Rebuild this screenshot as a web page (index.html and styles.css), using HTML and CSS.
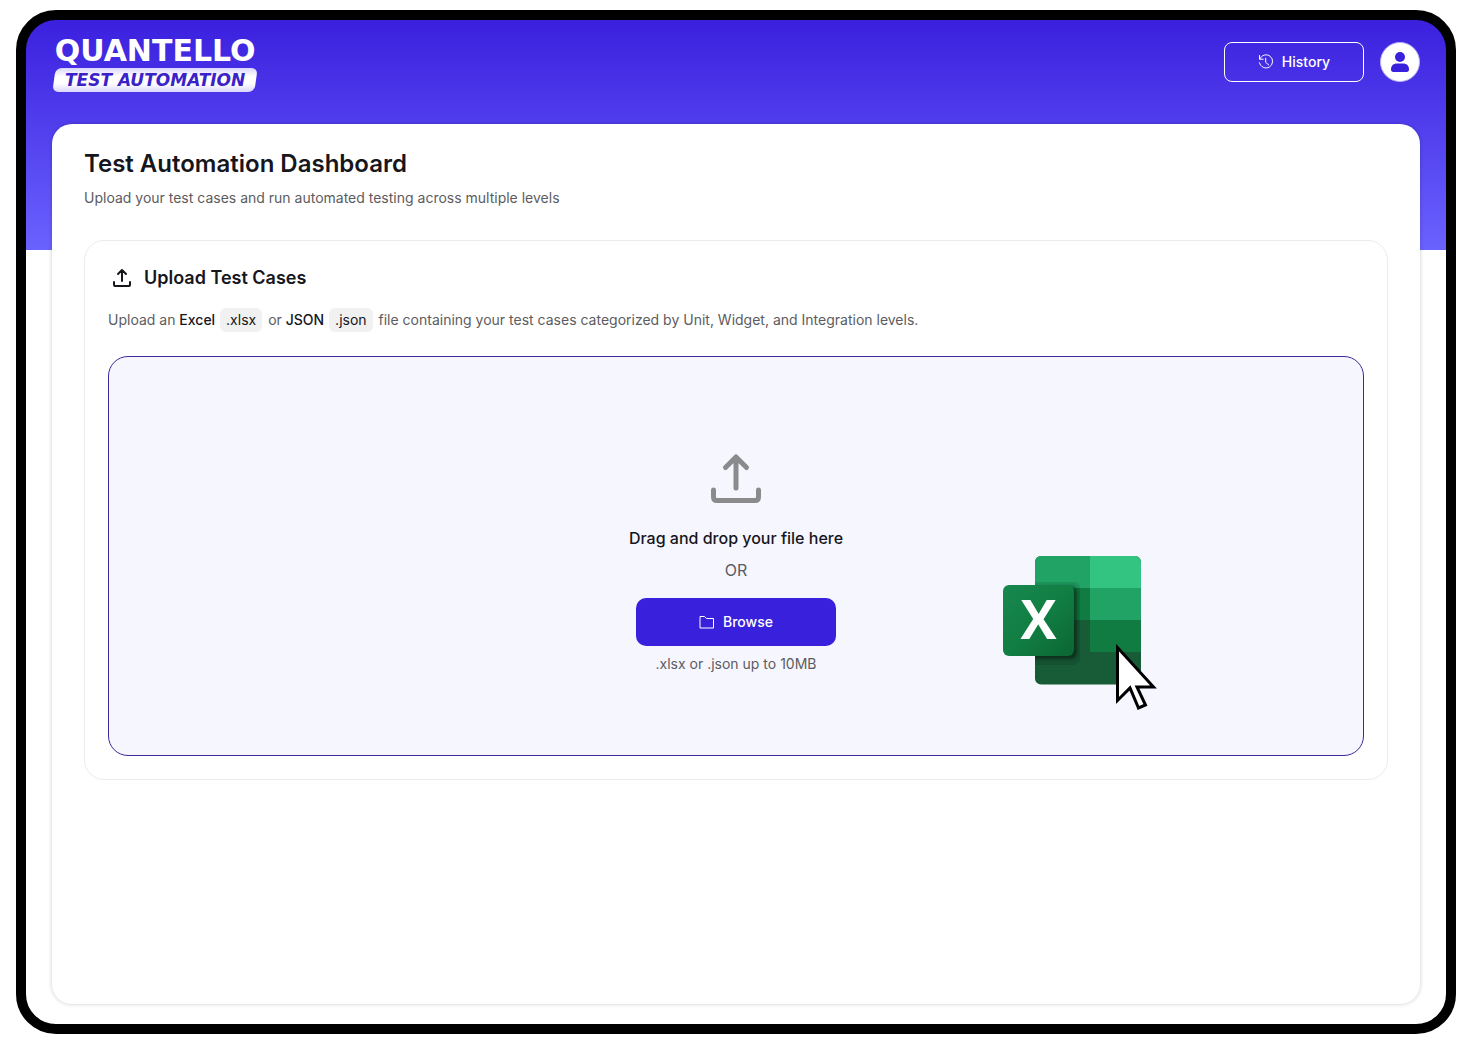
FILE: index.html
```html
<!DOCTYPE html>
<html lang="en">
<head>
    <meta charset="UTF-8">
    <meta name="viewport" content="width=device-width, initial-scale=1.0">
    <title>Test Automation Dashboard</title>
    <link rel="stylesheet" href="styles.css">
</head>
<body>
<div class="app-frame">
    <header class="topbar">
        <a class="logo" href="#">
            <span class="logo-name">QUANTELLO</span>
            <span class="logo-product">TEST AUTOMATION</span>
        </a>
        <div class="topbar-actions">
            <button type="button" class="history-btn">
                <svg width="16" height="16" viewBox="0 0 16 16" fill="none" stroke="currentColor" stroke-linecap="round" stroke-linejoin="round">
                    <path d="M1.5 1.5v3.7h3.7M1.8 5A6.6 6.6 0 1 1 1.5 8.8M7.7 4.2v4.2l3 2.6"/>
                </svg>
                History
            </button>
            <button type="button" class="avatar" aria-label="Account">
                <svg width="20" height="22" viewBox="0 0 20 22" fill="currentColor">
                    <circle cx="10" cy="6" r="5"/>
                    <path d="M1 18.5C1 14.5 3.5 12.5 7 12.5h6c3.5 0 6 2 6 6 0 1.500-.8 2.500-2.300 2.500H3.300C1.800 21 1 20 1 18.500z"/>
                </svg>
            </button>
        </div>
    </header>

    <main class="card">
        <h1>Test Automation Dashboard</h1>
        <p class="subtitle">Upload your test cases and run automated testing across multiple levels</p>

        <section class="panel">
            <h2>
                <svg width="28" height="28" viewBox="0 0 28 28" fill="none" stroke="currentColor" stroke-width="2" stroke-linecap="round" stroke-linejoin="round">
                    <path d="M14 17V6.500M10 10l4-4 4 4M6 18v3q0 1 1 1h14q1 0 1-1v-3"/>
                </svg>
                Upload Test Cases
            </h2>
            <p class="panel-text">Upload an <strong>Excel</strong> <code>.xlsx</code> or <strong>JSON</strong> <code>.json</code> file containing your test cases categorized by Unit, Widget, and Integration levels.</p>

            <div class="dropzone">
                <svg class="drop-icon" width="64" height="64" viewBox="0 0 64 64" fill="none" stroke="currentColor" stroke-width="5" stroke-linecap="round" stroke-linejoin="round">
                    <path d="M32 42V11M21.500 21.500L32 11l10.500 10.500M9.500 44v7q0 3.500 3.500 3.500h38q3.500 0 3.500-3.500v-7"/>
                </svg>
                <p class="drop-title">Drag and drop your file here</p>
                <p class="drop-or">OR</p>
                <button type="button" class="browse-btn">
                    <svg width="16" height="16" viewBox="0 0 16 16" fill="none" stroke="currentColor" stroke-linejoin="round">
                        <path d="M1 2.500h4.500l2 2h7v9.500H1z"/>
                    </svg>
                    Browse
                </button>
                <p class="drop-hint">.xlsx or .json up to 10MB</p>

                <!-- Spreadsheet being dragged in -->
                <svg class="drag-file" width="160" height="164" viewBox="0 0 160 164">
                    <defs>
                        <linearGradient id="tile" x1="0" y1="0" x2="1" y2="1">
                            <stop offset="0" stop-color="#18884f"/>
                            <stop offset=".5" stop-color="#117e43"/>
                            <stop offset="1" stop-color="#0b6631"/>
                        </linearGradient>
                        <clipPath id="sheet"><rect x="35" y="6" width="106" height="128.500" rx="6"/></clipPath>
                        <filter id="soft"><feGaussianBlur stdDeviation="1.500"/></filter>
                    </defs>
                    <g clip-path="url(#sheet)">
                        <rect x="35" y="6" width="106" height="129" fill="#185c37"/>
                        <rect x="35" y="6" width="55" height="32" fill="#21a366"/>
                        <rect x="90" y="6" width="51" height="32" fill="#33c481"/>
                        <rect x="35" y="38" width="55" height="32" fill="#107c41"/>
                        <rect x="90" y="38" width="51" height="32" fill="#21a366"/>
                        <rect x="90" y="70" width="51" height="32" fill="#107c41"/>
                        <rect x="20" y="32" width="60" height="83" rx="6" opacity=".1"/>
                        <rect x="20" y="36" width="57" height="73" rx="6" opacity=".4" filter="url(#soft)"/>
                    </g>
                    <rect x="3" y="35" width="71" height="71" rx="6" fill="url(#tile)"/>
                    <text class="tile-letter" x="38.500" y="89" text-anchor="middle">X</text>
                    <path d="M117.500 97.500v53l12.500-12.500 8.500 20 7-3-8.500-18h16.500z" fill="#fff" stroke="#000" stroke-width="3"/>
                </svg>
            </div>
        </section>
    </main>
</div>
</body>
</html>
```
FILE: styles.css
```css
* {
    box-sizing: border-box;
}

body {
    margin: 0;
    padding: 10px 16px 22px;
    background-color: #fff;
    color: #16161d;
    font-family: Inter, sans-serif;
    font-size: 14px;
    line-height: 20px;
}

h1, h2, p {
    margin: 0;
}

button {
    font: inherit;
    font-weight: 500;
    cursor: pointer;
}

.app-frame {
    display: flex;
    flex-direction: column;
    min-height: calc(100vh - 32px);
    padding: 22px 26px 20px;
    border: 10px solid #000;
    border-radius: 40px;
    background: linear-gradient(#3b20de, #6a62ff) no-repeat 0 0 / 100% 230px;
}

.topbar {
    display: flex;
    justify-content: space-between;
    align-items: flex-start;
    height: 82px;
}

.logo {
    display: flex;
    flex-direction: column;
    align-items: center;
    gap: 8px;
    color: #fff;
    font-family: "DejaVu Sans", sans-serif;
    font-weight: bold;
    text-decoration: none;
}

.logo-name {
    font-size: 30px;
    line-height: 18px;
}

.logo-product {
    position: relative;
    z-index: 0;
    padding: 0 13px;
    color: #3b22c8;
    font-size: 17px;
    font-style: italic;
    line-height: 24px;
}

/* Slanted plate behind the product name */
.logo-product::before {
    content: "";
    position: absolute;
    inset: 0 2px;
    z-index: -1;
    border-radius: 6px;
    background: linear-gradient(#d9d5fc, #fff 35%, #fff 65%, #d9d5fc);
    transform: skewX(-8deg);
}

.topbar-actions {
    display: flex;
    gap: 16px;
}

.history-btn {
    display: flex;
    justify-content: center;
    align-items: center;
    gap: 8px;
    width: 140px;
    height: 40px;
    border: 1px solid #fff;
    border-radius: 8px;
    background: none;
    color: #fff;
}

.avatar {
    display: flex;
    justify-content: center;
    align-items: center;
    width: 40px;
    height: 40px;
    padding: 0;
    border: 1px solid #b9b2f8;
    border-radius: 50%;
    background-color: #fff;
    color: #3920dc;
}

.card {
    flex: 1;
    padding: 24px 32px;
    border-radius: 20px;
    background-color: #fff;
    box-shadow: 0 0 4px rgba(0, 0, 0, 0.2);
}

h1 {
    font-size: 24px;
    font-weight: 600;
    line-height: 32px;
}

.subtitle {
    margin-top: 8px;
    color: #5c5c60;
}

.panel {
    margin-top: 32px;
    padding: 23px;
    border: 1px solid #ebebeb;
    border-radius: 20px;
}

h2 {
    display: flex;
    align-items: center;
    gap: 8px;
    font-size: 18px;
    font-weight: 600;
    line-height: 28px;
}

.panel-text {
    margin-top: 16px;
    color: #5c5c60;
    line-height: 24px;
}

.panel-text strong {
    color: #16161d;
    font-weight: 500;
}

.panel-text code {
    display: inline-block;
    padding: 0 6px;
    margin: 0 2px 0 1px;
    border-radius: 6px;
    background-color: #f1f1f1;
    color: #16161d;
    font: inherit;
}

.dropzone {
    position: relative;
    display: flex;
    flex-direction: column;
    align-items: center;
    justify-content: center;
    min-height: 400px;
    margin-top: 24px;
    padding-top: 8px;
    border: 1px solid #3c2a9c;
    border-radius: 20px;
    background-color: #f6f6ff;
    color: #5c5c60;
}

.drop-icon {
    color: #8b8b8d;
}

.drop-title {
    margin-top: 16px;
    color: #16161d;
    font-size: 16px;
    font-weight: 500;
    line-height: 24px;
}

.drop-or {
    margin-top: 8px;
    font-size: 16px;
    line-height: 24px;
}

.browse-btn {
    display: flex;
    justify-content: center;
    align-items: center;
    gap: 8px;
    width: 200px;
    height: 48px;
    margin-top: 16px;
    border: none;
    border-radius: 10px;
    background-color: #3920dc;
    color: #fff;
}

.browse-btn:hover {
    background-color: #2f19c0;
}

.drop-hint {
    margin-top: 8px;
}

.drag-file {
    position: absolute;
    top: 193px;
    left: calc(50% + 264px);
}

.tile-letter {
    fill: #fff;
    font-family: "Open Sans", sans-serif;
    font-size: 54px;
    font-weight: bold;
}
```
